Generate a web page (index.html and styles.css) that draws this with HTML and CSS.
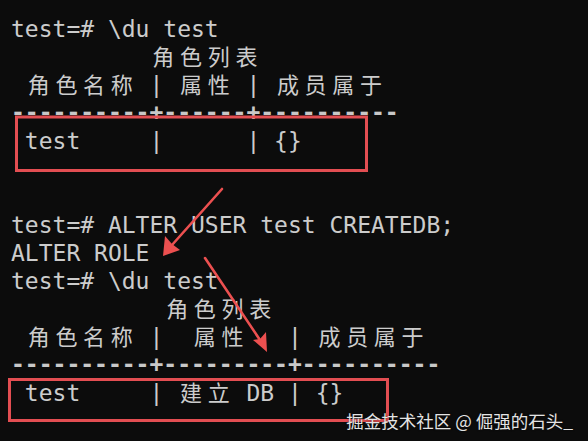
FILE: index.html
```html
<!DOCTYPE html>
<html lang="zh">
<head>
<meta charset="utf-8">
<title>psql \du</title>
<link rel="stylesheet" href="styles.css">
</head>
<body>
<div class="term">
<div class="line">test=# \du test</div>
<div class="line">          <span class="w">角</span><span class="w">色</span><span class="w">列</span><span class="w">表</span></div>
<div class="line"> <span class="w">角</span><span class="w">色</span><span class="w">名</span><span class="w">称</span> | <span class="w">属</span><span class="w">性</span> | <span class="w">成</span><span class="w">员</span><span class="w">属</span><span class="w">于</span></div>
<div class="line rule">----------+------+----------</div>
<div class="line"> test     |      | {}</div>
<div class="line"></div>
<div class="line"></div>
<div class="line">test=# ALTER USER test CREATEDB;</div>
<div class="line">ALTER ROLE</div>
<div class="line">test=# \du test</div>
<div class="line">           <span class="w">角</span><span class="w">色</span><span class="w">列</span><span class="w">表</span></div>
<div class="line"> <span class="w">角</span><span class="w">色</span><span class="w">名</span><span class="w">称</span> |  <span class="w">属</span><span class="w">性</span>   | <span class="w">成</span><span class="w">员</span><span class="w">属</span><span class="w">于</span></div>
<div class="line rule">----------+---------+----------</div>
<div class="line"> test     | <span class="w">建</span><span class="w">立</span> DB | {}</div>
</div>

<svg class="marks" width="588" height="441" viewBox="0 0 588 441" aria-hidden="true">
  <rect x="16.5" y="117" width="350" height="53.5" fill="none" stroke="#e34e52" stroke-width="3"/>
  <rect x="9.5" y="379.5" width="378" height="41" fill="none" stroke="#e34e52" stroke-width="3"/>
  <line x1="222" y1="189" x2="172" y2="245" stroke="#ec5050" stroke-width="2.6" stroke-linecap="round"/>
  <polygon points="163,256 165,236 172,244 180,250" fill="#ec5050"/>
  <line x1="205" y1="258" x2="260" y2="340" stroke="#ec5050" stroke-width="2.6" stroke-linecap="round"/>
  <polygon points="267,352 253,340 260,339 266,332" fill="#ec5050"/>
</svg>

<div class="watermark">掘金技术社区 @ 倔强的石头_</div>
</body>
</html>
```

FILE: styles.css
```css
html, body {
  margin: 0;
  padding: 0;
  background: #0c0c0c;
}

body {
  position: relative;
  width: 588px;
  height: 441px;
  overflow: hidden;
}

.term {
  padding: 15px 0 0 11px;
  font-family: "DejaVu Sans Mono", "Liberation Mono", monospace;
  font-size: 23px;
  color: #cccccc;
}

.line {
  height: 28px;
  line-height: 28px;
  white-space: pre;
  overflow: visible;
}

.rule {
  line-height: 26px;
  font-weight: bold;
  color: #c8c8c8;
}

.w {
  display: inline-block;
  width: 27.69px;
  text-align: center;
  font-family: "Noto Sans CJK SC", "Noto Sans CJK JP", sans-serif;
  font-size: 22px;
  line-height: 22px;
  vertical-align: baseline;
}

.marks {
  position: absolute;
  left: 0;
  top: 0;
  pointer-events: none;
}

.watermark {
  position: absolute;
  right: 15px;
  bottom: 9px;
  font-family: "Noto Sans CJK SC", "Noto Sans", sans-serif;
  font-size: 17.5px;
  line-height: 22px;
  color: #e4e4e4;
  text-shadow: 0 0 2px rgba(0, 0, 0, 0.6);
  white-space: nowrap;
}
```
